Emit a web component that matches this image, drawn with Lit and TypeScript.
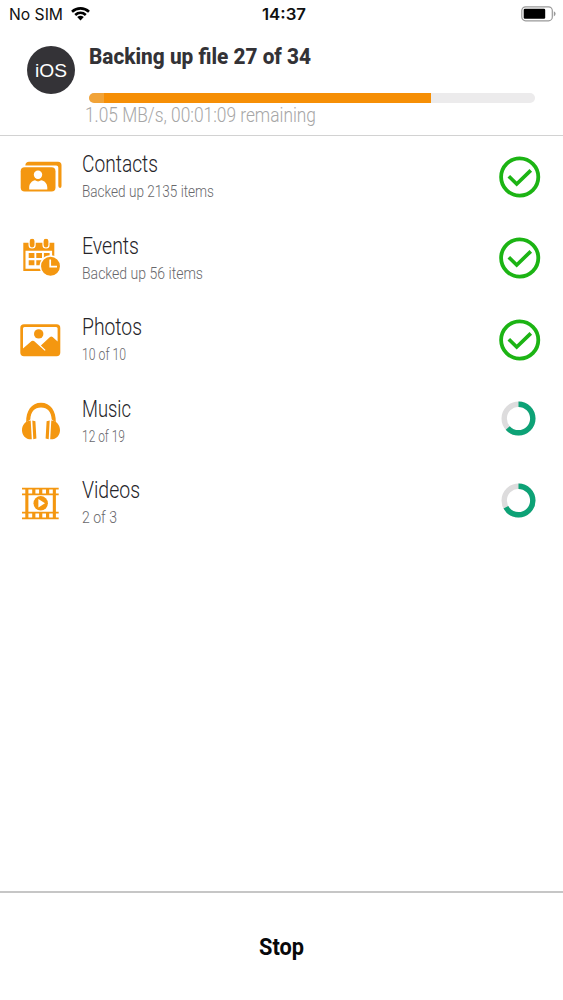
import { LitElement, html, svg, css } from "lit";
import { customElement, property } from "lit/decorators.js";

/** One line of text, condensed to an exact advance width. */
@customElement("fit-text")
class FitText extends LitElement {
  @property() text = "";
  @property({ type: Number }) width = 100;
  @property({ type: Number }) height = 24;
  @property({ type: Number }) baseline = 20;

  static styles = css`
    :host { display: block; }
    svg { display: block; overflow: visible; }
    text { fill: currentColor; }
  `;

  render() {
    return html`<svg width=${this.width} height=${this.height}>
      <text x="0" y=${this.baseline} textLength=${this.width} lengthAdjust="spacingAndGlyphs">${this.text}</text>
    </svg>`;
  }
}

const icons: Record<string, unknown> = {
  contacts: svg`
    <path d="M9.300 12.400C9.600 10 10.700 8.800 13 8.800H42Q45.500 8.800 45.500 12.300V33Q45.500 34.600 44.300 34.900Q42.500 34.900 42.300 33V14.500Q42.300 12.400 40.100 12.400Z"/>
    <rect x="4.700" y="14.200" width="34.800" height="24.300" rx="4"/>
    <circle cx="22" cy="21.700" r="4.200" fill="#fff"/>
    <path fill="#fff" d="M13.200 36.400V34.500C13.200 30.300 16.400 27.600 19 27.300Q22 29.500 25.200 27.300C28.300 27.700 31.300 30.300 31.300 34.500V36.400Z"/>`,
  events: svg`
    <path fill-rule="evenodd" d="M7.300 8.700H38.300V37H7.300ZM9.500 16.700V34.800H36.100V16.700Z"/>
    <g stroke="#fff" stroke-width="1.200"><rect x="13.100" y="4.200" width="6" height="9.800" rx="2.900"/><rect x="27" y="4.200" width="6" height="9.800" rx="2.900"/></g>
    <path d="M12.700 18.900h5.700v5.100h-5.700zM20.300 18.900h5.700v5.100h-5.700zM27.900 18.900h5.700v5.100h-5.700zM12.700 26.200h5.700v5.100h-5.700zM20.300 26.200h5.700v5.100h-5.700z"/>
    <circle cx="34.500" cy="32.300" r="10.200" stroke="#fff" stroke-width="1.500"/>
    <path d="M34.200 25.500V32.600H41" fill="none" stroke="#fff" stroke-width="1.700"/>`,
  photos: svg`
    <path fill-rule="evenodd" d="M8 8.300H40.600Q44.300 8.300 44.300 12V36.600Q44.300 40.300 40.600 40.300H8Q4.300 40.300 4.300 36.600V12Q4.300 8.300 8 8.300ZM8.500 11.100Q7 11.100 7 12.600V32.500L15.600 25.100Q16.800 24.200 18 25.100L28.800 34.800L29.600 34L24.900 29.500L34 21Q35.300 20 36.600 21L41.600 25.500V12.600Q41.600 11.100 40.100 11.100Z"/>
    <circle cx="22.700" cy="17.900" r="4.700"/>`,
  music: svg`
    <path d="M10.200 25.500C9.800 14 15.500 5.800 25 5.800S40.200 14 39.800 25.500L35.700 22.500C35.200 14.500 31.500 10.400 25 10.400S14.800 14.500 14.300 22.500Z"/>
    <path d="M14.700 23.600L15.800 42.300C9.800 42.700 6 38.500 6 33.200C6 28.200 9.500 23.800 14.700 23.600ZM35.300 23.600L34.200 42.300C40.200 42.700 44 38.500 44 33.200C44 28.200 40.500 23.800 35.300 23.600Z"/>
    <path d="M16.300 23.500L19.400 24.300L20.400 41.500L17.300 42.300ZM33.700 23.500L30.600 24.300L29.600 41.500L32.700 42.300Z"/>`,
  videos: svg`
    <path d="M6 8.700H42.700V10.500H6ZM6 14.400H42.700V16.200H6ZM6 32.700H42.700V34.500H6ZM6 38.400H42.700V40.200H6Z"/>
    <path d="M9.300 9H12.400V40H9.300ZM36.800 9H39.900V40H36.800ZM16.200 9h3.200v6h-3.200zM23.100 9h3.200v6h-3.200zM30 9h3.200v6h-3.200zM16.200 33.500h3.200v6h-3.200zM23.100 33.500h3.200v6h-3.200zM30 33.500h3.200v6h-3.200z"/>
    <circle cx="24.700" cy="24.300" r="7.200"/>
    <path fill="#fff" d="M22.400 20L29 24.300L22.400 28.600Z"/>`,
};

interface Item {
  icon: string;
  title: string;
  titleWidth: number;
  detail: string;
  detailWidth: number;
  progress: number;
}

const items: Item[] = [
  { icon: "contacts", title: "Contacts", titleWidth: 76, detail: "Backed up 2135 items", detailWidth: 132, progress: 1 },
  { icon: "events", title: "Events", titleWidth: 57, detail: "Backed up 56 items", detailWidth: 121, progress: 1 },
  { icon: "photos", title: "Photos", titleWidth: 60, detail: "10 of 10", detailWidth: 44, progress: 1 },
  { icon: "music", title: "Music", titleWidth: 49, detail: "12 of 19", detailWidth: 43, progress: 12 / 19 },
  { icon: "videos", title: "Videos", titleWidth: 58, detail: "2 of 3", detailWidth: 35, progress: 2 / 3 },
];

@customElement("app-root")
class AppRoot extends LitElement {
  static styles = css`
    :host {
      display: flex; flex-direction: column; box-sizing: border-box;
      width: 100%; height: 100vh; overflow: hidden;
      background: #fff; color: #333236;
      font-family: Roboto, "Open Sans", sans-serif;
    }
    svg { display: block; }
    .status {
      display: grid; grid-template-columns: 1fr auto 1fr; height: 28px; flex: none;
      padding: 0 7px 0 9px; box-sizing: border-box; color: #111;
      font: 400 16px Inter, sans-serif;
    }
    .carrier { display: flex; gap: 8px; }
    .wifi { margin-top: 6px; }
    .time { font-weight: 600; padding-left: 2px; }
    .battery { justify-self: end; margin-top: 6px; }
    header {
      display: flex; height: 107.600px; flex: none; box-sizing: border-box;
      border-bottom: 1.600px solid #d2d2d2; padding: 18px 28px 0 27px;
    }
    .avatar {
      width: 48px; height: 48px; border-radius: 50%; background: #343337;
      display: flex; align-items: center; justify-content: center; color: #fff;
      font: 400 18px "Liberation Sans", sans-serif; flex: none;
    }
    .avatar fit-text { margin-top: 2px; }
    .summary { flex: 1; padding-left: 14px; }
    .headline { font-size: 22.500px; font-weight: 800; height: 28px; }
    .speed { color: #a6a6a6; font-size: 20px; font-weight: 300; margin-left: -4.500px; }
    .bar {
      display: flex; height: 10.500px; margin-top: 18.500px; border-radius: 5.500px;
      overflow: hidden; background: #ecebec;
    }
    .bar-head { width: 15px; background: #f1a338; }
    .bar-fill { background: #f68f06; }
    main { flex: 1; }
    .row {
      display: flex; height: 81.500px; box-sizing: border-box;
      padding: 0 22px 0 16px;
    }
    .icon { margin-top: 17px; fill: #f49710; flex: none; }
    .label { flex: 1; padding: 15.500px 0 0 18px; }
    .title { font-size: 23.500px; font-weight: 300; color: #252429; }
    .detail { font-size: 17px; font-weight: 300; color: #68686c; }
    .state { margin-top: 20px; flex: none; fill: none; }
    footer {
      height: 109px; flex: none; box-sizing: border-box; border-top: 2px solid #c6c6c6;
      display: flex; justify-content: center; padding-top: 42.500px; color: #08090b;
      font-size: 23.500px; font-weight: 700;
    }
  `;

  private state(progress: number) {
    if (progress === 1) {
      return html`<svg class="state" width="42" height="42">
        <circle cx="20.700" cy="21" r="18.600" stroke="#1cb414" stroke-width="3.800"/>
        <path d="M9.800 20.200L17.700 28L31.800 14.300" stroke="#1cb414" stroke-width="3.700"/>
      </svg>`;
    }
    const length = 2 * Math.PI * 14.3;
    return html`<svg class="state" width="42" height="42">
      <g transform="rotate(-90 19.500 18.500)" stroke-width="5.400">
        <circle cx="19.500" cy="18.500" r="14.300" stroke="#dddcdd"/>
        <circle cx="19.500" cy="18.500" r="14.300" stroke="#0da276" stroke-dasharray="${length * progress} ${length}"/>
      </g>
    </svg>`;
  }

  render() {
    return html`
      <div class="status">
        <div class="carrier">
          <fit-text text="No SIM" width="54" height="28" baseline="20"></fit-text>
          <svg class="wifi" width="19" height="15" viewBox="0 0 19 15" fill="none" stroke="#000" stroke-width="2.600">
            <path d="M1 5.700C5.900 1.200 13.100 1.200 18 5.700M4.200 9C7.300 6.200 11.700 6.200 14.800 9"/>
            <path fill="#000" stroke="none" d="M6.200 11.100Q9.500 8.400 12.800 11.100L9.500 14.400Z"/>
          </svg>
        </div>
        <fit-text class="time" text="14:37" width="44" height="28" baseline="20"></fit-text>
        <svg class="battery" width="35" height="16" viewBox="0 0 35 16">
          <rect x=".8" y=".8" width="30.500" height="14" rx="3.800" fill="none" stroke="#999" stroke-width="1.200"/>
          <rect x="2.700" y="2.800" width="21.500" height="10" rx="1.300"/>
          <path fill="#999" d="M32.800 5.200Q34.600 6 34.600 7.800T32.800 10.400Z"/>
        </svg>
      </div>
      <header>
        <div class="avatar"><fit-text text="iOS" width="32" height="20" baseline="16"></fit-text></div>
        <div class="summary">
          <fit-text class="headline" text="Backing up file 27 of 34" width="222" height="28" baseline="18"></fit-text>
          <div class="bar"><div class="bar-head"></div><div class="bar-fill" style="width:327px"></div></div>
          <fit-text class="speed" text="1.05 MB/s, 00:01:09 remaining" width="231" height="28" baseline="19"></fit-text>
        </div>
      </header>
      <main>
        ${items.map((item) => html`
          <div class="row">
            <svg class="icon" width="48" height="48">${icons[item.icon]}</svg>
            <div class="label">
              <fit-text class="title" text=${item.title} width=${item.titleWidth} height="26" baseline="20.500"></fit-text>
              <fit-text class="detail" text=${item.detail} width=${item.detailWidth} height="22" baseline="19.700"></fit-text>
            </div>
            ${this.state(item.progress)}
          </div>`)}
      </main>
      <footer><fit-text text="Stop" width="45" height="28" baseline="19"></fit-text></footer>
    `;
  }
}
